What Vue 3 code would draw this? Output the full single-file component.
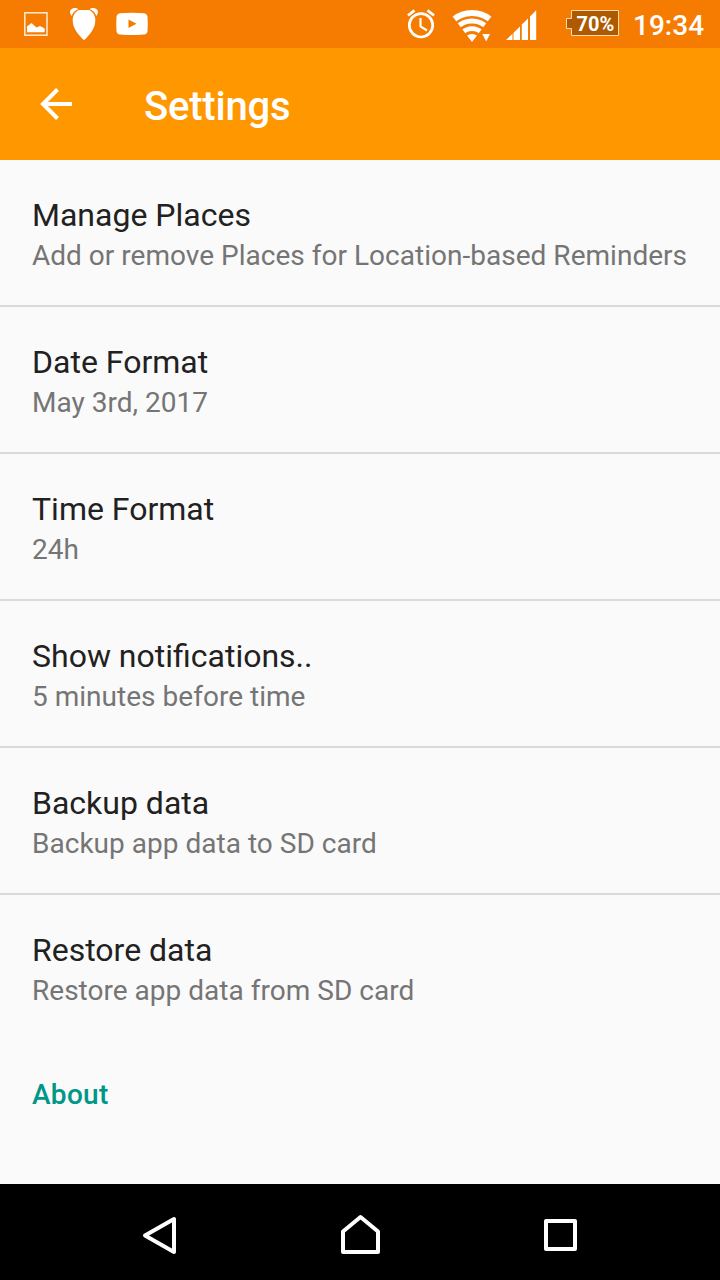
<script setup>
const items = [
  { title: 'Manage Places', summary: 'Add or remove Places for Location-based Reminders' },
  { title: 'Date Format', summary: 'May 3rd, 2017' },
  { title: 'Time Format', summary: '24h' },
  { title: 'Show notifications..', summary: '5 minutes before time' },
  { title: 'Backup data', summary: 'Backup app data to SD card' },
  { title: 'Restore data', summary: 'Restore app data from SD card' },
]
</script>

<template>
  <div class="screen">
    <div class="status">
      <svg class="notifications" width="160" height="48" viewBox="0 0 160 48">
        <rect x="24.800" y="12.800" width="22.200" height="22.400" fill="none" stroke="#fff" stroke-opacity=".85" stroke-width="1.500" />
        <path d="M27 32.300V26.500L31.500 23L36.500 27.500L40 26L44.700 28.500V32.300Z" fill="#fff" />
        <path d="M79 10H89C93 12 95.300 15.500 95.300 20C95.300 28 90.500 34 84 40.300C77.500 34 72.700 28 72.700 20C72.700 15.500 75 12 79 10Z" fill="#fff" />
        <path d="M71.800 16C69.500 13.500 69.300 10.300 72 8.700C74.500 7.300 77.500 8 78.300 9.300C74.500 10.700 72.700 13 71.800 16ZM96.200 16C98.500 13.500 98.700 10.300 96 8.700C93.500 7.300 90.500 8 89.700 9.300C93.500 10.700 95.300 13 96.200 16Z" fill="#fff" />
        <path d="M120 13.300Q132 12.300 144 13.300Q147.200 13.700 147.500 17Q148 24 147.500 31Q147.200 34.200 144 34.600Q132 35.600 120 34.600Q116.800 34.200 116.500 31Q116 24 116.500 17Q116.800 13.700 120 13.300ZM128.500 19.500V28L136.500 23.800Z" fill="#fff" fill-rule="evenodd" />
      </svg>
      <div class="system">
        <svg width="32" height="48" viewBox="405 0 32 48" fill="none" stroke="#fff">
          <circle cx="421" cy="25.300" r="11.700" stroke-width="2.700" />
          <path d="M420.500 18V26.500L427 30.500" stroke-width="2.200" />
          <path d="M408 15.500L414.500 10.300M434 15.500L427.500 10.300" stroke-width="2.800" />
        </svg>
        <svg class="wifi" width="40" height="48" viewBox="452 0 40 48">
          <clipPath id="fan"><path d="M472 42L446.800 8.800V4H497.200V8.800Z" /></clipPath>
          <g clip-path="url(#fan)" fill="none" stroke="#fff">
            <circle cx="472" cy="42" r="29" stroke-width="6" />
            <circle cx="472" cy="42" r="21" stroke-width="5.200" />
            <circle cx="472" cy="42" r="13.400" stroke-width="4.800" />
            <circle cx="472" cy="42" r="8" fill="#fff" stroke="none" />
          </g>
          <path d="M482.300 34H490L486.200 41.500Z" fill="#fff" />
        </svg>
        <svg class="signal" width="32" height="48" viewBox="505 0 32 48">
          <path d="M506 40L512.500 33.800V40ZM513.500 32.800L520 26.400V40H513.500ZM521.800 24.600L528 18.500V40H521.800ZM530 16.500L536.200 10.300V40H530Z" fill="#fff" />
        </svg>
        <div class="battery">
          <svg width="54" height="48" viewBox="566 0 54 48">
            <path d="M571.500 10.500H618.500V35.500H571.500V28.500H566.500V18.500H571.500Z" fill="#ae5a00" stroke="#ffd9b0" />
          </svg>
          <span class="percent">70%</span>
        </div>
        <span class="clock">19:34</span>
      </div>
    </div>

    <header class="appbar">
      <svg width="34" height="34" viewBox="39 87 34 34" fill="none" stroke="#fff" stroke-width="4">
        <path d="M72 104H43M57.500 89.500L43 104L57.500 118.500" />
      </svg>
      <h1>Settings</h1>
    </header>

    <main>
      <section v-for="item in items" :key="item.title" class="row">
        <div class="title">{{ item.title }}</div>
        <div class="summary">{{ item.summary }}</div>
      </section>
      <h2>About</h2>
    </main>

    <nav>
      <svg width="720" height="96" viewBox="0 1184 720 96" fill="none" stroke="#fff" stroke-width="4" stroke-linejoin="round">
        <path d="M145 1235.500L174 1219V1252Z" />
        <path d="M343 1252V1231.500L360.500 1217L378 1231.500V1252Z" />
        <rect x="546" y="1221" width="29" height="28" />
      </svg>
    </nav>
  </div>
</template>

<style scoped>
.screen {
  width: 720px;
  height: 1280px;
  display: flex;
  flex-direction: column;
  background: #fafafa;
  font-family: Roboto, "Noto Sans", sans-serif;
  overflow: hidden;
}
svg { display: block; flex: none; }
.status {
  height: 48px;
  display: flex;
  justify-content: space-between;
  background: #f57c00;
  color: #fff;
}
.system { display: flex; width: 315px; }
.wifi { margin-left: 15px; }
.signal { margin-left: 13px; }
.battery { position: relative; margin-left: 29px; }
.percent {
  position: absolute;
  left: 10.5px;
  top: 12px;
  font-size: 20px;
  line-height: 24px;
  font-weight: 700;
}
.clock {
  margin-left: 13px;
  font-size: 28px;
  line-height: 52px;
  font-weight: 500;
}
.appbar {
  height: 112px;
  display: flex;
  align-items: center;
  padding-left: 39px;
  background: #ff9800;
  color: #fff;
}
h1 {
  margin: 6px 0 0 71px;
  font-size: 40px;
  line-height: 48px;
  font-weight: 500;
  letter-spacing: -0.2px;
}
main { flex: 1; }
.row {
  box-sizing: border-box;
  height: 147px;
  padding: 36px 32px 0;
  border-bottom: 2px solid #dadada;
  white-space: nowrap;
}
.row:last-of-type { border-bottom: 0; }
.title { font-size: 32px; line-height: 38px; color: #212121; }
.summary { margin-top: 5px; font-size: 28px; line-height: 33px; color: #757575; letter-spacing: 0.02px; }
h2 {
  margin: 36px 32px 0;
  font-size: 28px;
  line-height: 33px;
  font-weight: 500;
  letter-spacing: 0.3px;
  color: #009688;
}
nav { height: 96px; background: #000; }
</style>

<style>
body { margin: 0; }
</style>
